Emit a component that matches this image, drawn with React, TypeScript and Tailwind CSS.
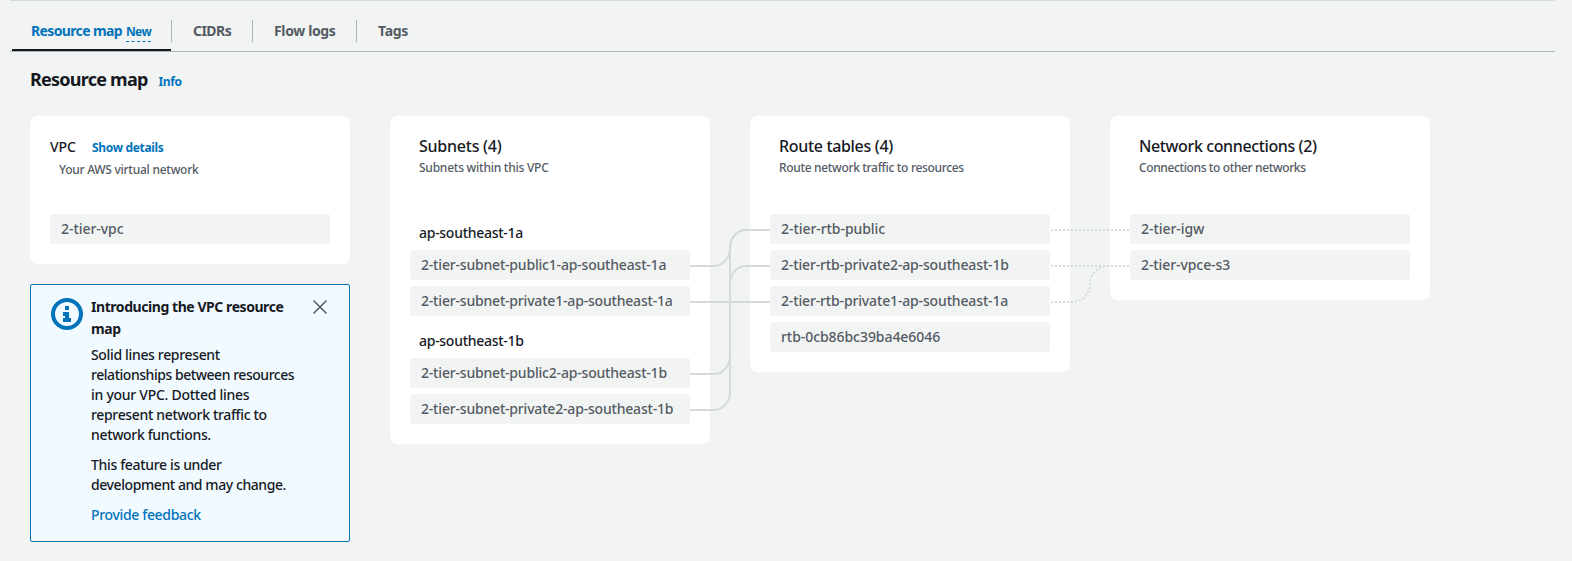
import type { ReactNode } from "react";

type Entry = { name: string; tracking?: string };

function Tab({ children, className = "" }: { children: ReactNode; className?: string }) {
  return <div className={`h-[22px] border-l border-[#aab7b8] pl-[21px] ${className}`}>{children}</div>;
}

function Card({ children }: { children: ReactNode }) {
  return <section className="w-80 rounded-lg bg-white p-5">{children}</section>;
}

function CardHeader({
  title,
  subtitle,
  className = "tracking-[-0.3px]",
}: {
  title: string;
  subtitle: string;
  className?: string;
}) {
  return (
    <header className={`h-[78px] pl-[9px] ${className}`}>
      <h2 className="h-5 text-base leading-5 text-[#16191f]">{title}</h2>
      <p className="mt-[2px] text-xs leading-5 text-[#545b64]">{subtitle}</p>
    </header>
  );
}

function ResourceList({ items }: { items: Entry[] }) {
  return (
    <ul className="flex flex-col gap-1.5">
      {items.map(({ name, tracking = "tracking-[-0.19px]" }) => (
        <li
          key={name}
          className={`h-[30px] rounded-xs bg-[#f2f4f3] pl-[11px] leading-[29px] whitespace-nowrap text-[#545b64] ${tracking}`}
        >
          {name}
        </li>
      ))}
    </ul>
  );
}

function Zone({ name, items, className }: { name: string; items: Entry[]; className: string }) {
  return (
    <div className={className}>
      <h3 className="h-[27px] pl-[9px] leading-[19px] tracking-[-0.28px] text-[#16191f]">{name}</h3>
      <ResourceList items={items} />
    </div>
  );
}

function Connectors() {
  return (
    <svg
      className="pointer-events-none absolute top-0 left-0"
      width="1400"
      height="330"
      fill="none"
      stroke="#d5dbdb"
      strokeWidth="2"
    >
      <path d="M660 150H684A16 18 0 0 0 700 132A16 18 0 0 1 716 114H740" />
      <path d="M660 186H740" />
      <path d="M660 258H684A16 18 0 0 0 700 240V132A16 18 0 0 1 716 114H740" />
      <path d="M660 294H684A16 18 0 0 0 700 276V168A16 18 0 0 1 716 150H740" />
      <g strokeDasharray="2 2">
        <path d="M1021 114H1100" />
        <path d="M1021 150H1100" />
        <path d="M1021 186H1042A18 18 0 0 0 1060 168A18 18 0 0 1 1078 150H1100" />
      </g>
    </svg>
  );
}

function InfoBox() {
  return (
    <aside className="flex h-[258px] w-80 rounded-xs border border-[#0073bb] bg-[#f1faff] pt-3 pl-5">
      <svg className="mt-px shrink-0" width="32" height="32" viewBox="0 0 32 32">
        <circle cx="16" cy="16" r="14" fill="none" stroke="#0073bb" strokeWidth="4" />
        <path d="M14 8h4v4h-4zM12 14h6v6h2v4h-8v-4h2v-2h-2z" fill="#0073bb" />
      </svg>
      <div className="ml-2 w-[236px] leading-5 tracking-[-0.34px] whitespace-nowrap text-[#16191f]">
        <div className="flex justify-between leading-[22px] tracking-[-0.44px]">
          <h4 className="-mt-px font-bold">
            Introducing the VPC resource
            <br />
            map
          </h4>
          <svg
            className="mt-[3px]"
            width="14"
            height="14"
            viewBox="0 0 14 14"
            fill="none"
            stroke="#545b64"
            strokeWidth="1.5"
          >
            <path d="M.5.5l13 13M13.5.5l-13 13" />
          </svg>
        </div>
        <p className="mt-[5px]">
          Solid lines represent
          <br />
          <span className="tracking-[-0.46px]">relationships between resources</span>
          <br />
          <span className="tracking-[-0.27px]">in your VPC. Dotted lines</span>
          <br />
          represent network traffic to
          <br />
          network functions.
        </p>
        <p className="mt-2.5">
          This feature is under
          <br />
          <span className="tracking-[-0.42px]">development and may change.</span>
        </p>
        <a className="mt-2.5 block text-[#0073bb]">Provide feedback</a>
      </div>
    </aside>
  );
}

export default function App() {
  return (
    <main className="h-[561px] w-full overflow-hidden bg-[#f2f4f3] font-['Noto_Sans','Open_Sans',sans-serif] text-sm font-medium">
      <div className="mr-[17px] ml-2.5 h-[52px] border-t border-b border-t-[#d5dbdb] border-b-[#aab7b8]">
        <nav className="flex h-[50px] pt-[19px] leading-[21px] font-bold text-[#545b64]">
          <div className="ml-0.5 flex h-[31px] w-[159px] items-baseline border-b-2 border-[#16191f] pl-[19px] text-[#0073bb]">
            <span className="tracking-[-0.63px]">Resource map</span>
            <span className="ml-1 h-[21px] border-b border-dashed border-[#0073bb] text-xs leading-[21px] tracking-[-0.6px]">
              New
            </span>
          </div>
          <Tab className="w-[81px] tracking-[-0.55px]">CIDRs</Tab>
          <Tab className="w-[104px] tracking-[-0.36px]">Flow logs</Tab>
          <Tab className="tracking-[-0.3px]">Tags</Tab>
        </nav>
      </div>
      <div className="flex h-16 items-baseline pt-[14px] pl-[30px] font-bold">
        <h1 className="text-lg leading-[26px] tracking-[-0.76px] text-[#16191f]">Resource map</h1>
        <a className="ml-[11px] text-xs tracking-[-0.35px] text-[#0073bb]">Info</a>
      </div>
      <div className="relative ml-[30px] flex items-start gap-10">
        <div className="flex flex-col gap-5">
          <Card>
            <header className="h-[78px]">
              <div className="flex items-baseline leading-[22px]">
                <h2 className="w-[42px] tracking-[-0.1px] text-[#16191f]">VPC</h2>
                <a className="text-xs font-bold tracking-[-0.32px] text-[#0073bb]">Show details</a>
              </div>
              <p className="mt-0.5 pl-[9px] text-xs leading-5 tracking-[-0.26px] text-[#545b64]">
                Your AWS virtual network
              </p>
            </header>
            <ResourceList items={[{ name: "2-tier-vpc", tracking: "tracking-[-0.05px]" }]} />
          </Card>
          <InfoBox />
        </div>
        <Card>
          <CardHeader title="Subnets (4)" subtitle="Subnets within this VPC" className="tracking-[-0.24px]" />
          <Zone
            className="pt-[9px]"
            name="ap-southeast-1a"
            items={[
              { name: "2-tier-subnet-public1-ap-southeast-1a" },
              { name: "2-tier-subnet-private1-ap-southeast-1a" },
            ]}
          />
          <Zone
            className="pt-[15px]"
            name="ap-southeast-1b"
            items={[
              { name: "2-tier-subnet-public2-ap-southeast-1b" },
              { name: "2-tier-subnet-private2-ap-southeast-1b" },
            ]}
          />
        </Card>
        <Card>
          <CardHeader
            title="Route tables (4)"
            subtitle="Route network traffic to resources"
            className="tracking-[-0.33px]"
          />
          <ResourceList
            items={[
              { name: "2-tier-rtb-public", tracking: "tracking-[-0.06px]" },
              { name: "2-tier-rtb-private2-ap-southeast-1b", tracking: "tracking-[-0.15px]" },
              { name: "2-tier-rtb-private1-ap-southeast-1a", tracking: "tracking-[-0.15px]" },
              { name: "rtb-0cb86bc39ba4e6046", tracking: "tracking-[-0.06px]" },
            ]}
          />
        </Card>
        <Card>
          <CardHeader
            title="Network connections (2)"
            subtitle="Connections to other networks"
            className="tracking-[-0.38px]"
          />
          <ResourceList
            items={[
              { name: "2-tier-igw", tracking: "tracking-[-0.06px]" },
              { name: "2-tier-vpce-s3", tracking: "tracking-[-0.09px]" },
            ]}
          />
        </Card>
        <Connectors />
      </div>
    </main>
  );
}
